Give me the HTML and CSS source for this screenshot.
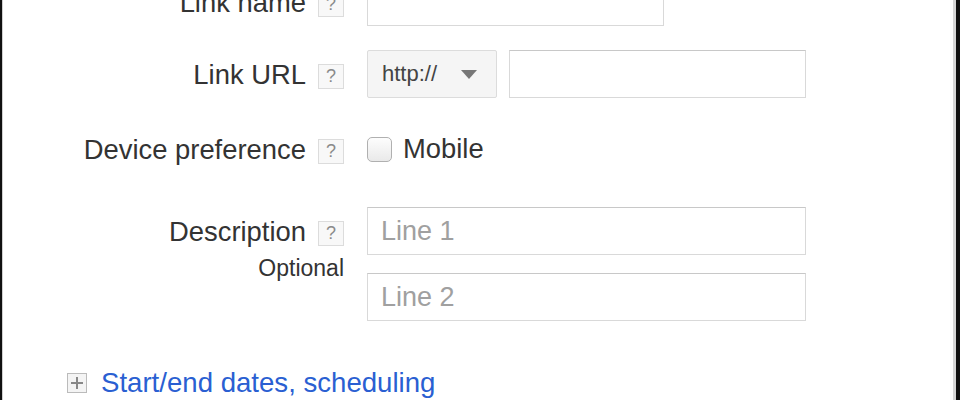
FILE: index.html
```html
<!DOCTYPE html>
<html lang="en">

<head>
  <meta charset="UTF-8">
  <meta name="viewport" content="width=device-width, initial-scale=1.0">
  <title>Sitelink</title>
  <link rel="stylesheet" href="styles.css">
</head>

<body>
  <div class="frame">
    <div class="panel">
      <div class="form">
        <div class="row">
          <div class="label">Link name <span class="help">?</span></div>
          <div class="control">
            <input class="text short" type="text">
          </div>
        </div>

        <div class="row">
          <div class="label">Link URL <span class="help">?</span></div>
          <div class="control">
            <div class="select">http:// <span class="arrow"></span></div>
            <input class="text short" type="text">
          </div>
        </div>

        <div class="row device">
          <div class="label">Device preference <span class="help">?</span></div>
          <div class="control">
            <label class="check"><span class="box"></span> Mobile</label>
          </div>
        </div>

        <div class="row desc">
          <div class="label">
            <div class="label-line">Description <span class="help">?</span></div>
            <div class="optional">Optional</div>
          </div>
          <div class="control lines">
            <input class="text wide" type="text" placeholder="Line 1">
            <input class="text wide" type="text" placeholder="Line 2">
          </div>
        </div>

        <div class="more">
          <span class="plus"></span>
          <a href="#">Start/end dates, scheduling</a>
        </div>
      </div>
    </div>
  </div>
</body>

</html>
```

FILE: styles.css
```css
html,
body {
  margin: 0;
  height: 100%;
  overflow: hidden;
}

body {
  font-family: "Liberation Sans", Arial, sans-serif;
  background-color: #fff;
  color: #333;
}

.frame {
  height: 100%;
  border-left: 2px solid #111;
  border-right: 4px solid #111;
  box-sizing: border-box;
}

.panel {
  display: flow-root;
  height: 100%;
  border-left: 1px solid #d0d0d0;
  border-right: 3px solid #d6d6d6;
  box-sizing: border-box;
}

.form {
  margin-top: -22px;
  display: flex;
  flex-direction: column;
}

.row {
  display: grid;
  grid-template-columns: 341px 1fr;
  column-gap: 23px;
  margin-bottom: 24px;
}

.label {
  font-size: 27.4px;
  text-align: right;
  display: flex;
  align-items: center;
  justify-content: flex-end;
  height: 48px;
  padding-top: 2px;
  box-sizing: border-box;
}

.help {
  display: inline-flex;
  align-items: center;
  justify-content: center;
  width: 24px;
  height: 23px;
  margin-left: 12px;
  border: 1px solid #dcdcdc;
  background-color: #f8f8f8;
  color: #8a8a8a;
  font-size: 18px;
  margin-top: 2px;
}

.control {
  display: flex;
  align-items: center;
  gap: 12px;
}

.text {
  height: 48px;
  box-sizing: border-box;
  border: 1px solid #d9d9d9;
  border-top-color: #c8c8c8;
  font-family: inherit;
  font-size: 27px;
  padding: 0 13px;
  color: #333;
  outline: none;
}

.text::placeholder {
  color: #a0a0a0;
}

.short {
  width: 297px;
}

.wide {
  width: 439px;
}

.select {
  width: 130px;
  height: 48px;
  box-sizing: border-box;
  display: flex;
  align-items: center;
  justify-content: space-between;
  padding: 0 19px 0 14px;
  background-color: #f5f5f5;
  border: 1px solid #dcdcdc;
  border-radius: 2px;
  font-size: 22px;
  color: #444;
}

.arrow {
  width: 0;
  height: 0;
  border-left: 8px solid transparent;
  border-right: 8px solid transparent;
  border-top: 9px solid #777;
}

.device {
  margin-bottom: 31px;
}

.device .label,
.device .control {
  height: 54px;
}

.check {
  display: flex;
  align-items: center;
  gap: 11px;
  font-size: 27.4px;
}

.box {
  width: 23px;
  height: 23px;
  border: 1px solid #b0b0b0;
  border-radius: 5px;
  background: linear-gradient(#fdfdfd, #e9e9e9);
}

.desc .label {
  height: auto;
  flex-direction: column;
  align-items: flex-end;
  justify-content: flex-start;
  padding-top: 0;
}

.label-line {
  display: flex;
  align-items: center;
  height: 48px;
  padding-top: 2px;
  box-sizing: border-box;
}

.optional {
  font-size: 23px;
  margin-top: 0;
}

.lines {
  flex-direction: column;
  align-items: flex-start;
  gap: 18px;
}

.more {
  display: flex;
  align-items: center;
  gap: 14px;
  margin-top: 22px;
  padding-left: 64px;
  font-size: 27.6px;
}

.plus {
  position: relative;
  width: 18px;
  height: 18px;
  border: 1px solid #bbb;
  background-color: #f4f4f4;
}

.plus::before,
.plus::after {
  content: "";
  position: absolute;
  background-color: #888;
}

.plus::before {
  left: 3px;
  right: 3px;
  top: 8px;
  height: 2px;
}

.plus::after {
  top: 3px;
  bottom: 3px;
  left: 8px;
  width: 2px;
}

.more a {
  color: #2a5fd2;
  text-decoration: none;
}
```
